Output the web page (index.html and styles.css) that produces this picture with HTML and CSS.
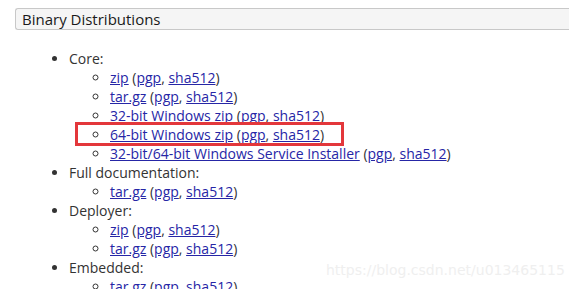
FILE: index.html
```html
<!DOCTYPE html>
<html lang="en">
<head>
    <meta charset="UTF-8" />
    <title>Binary Distributions</title>
    <link rel="stylesheet" href="styles.css">
</head>
<body>
    <h3 class="section-title">Binary Distributions</h3>
    <ul class="dist">
        <li>Core:
            <ul>
                <li><a href="#">zip</a> (<a href="#">pgp</a>, <a href="#">sha512</a>)</li>
                <li><a href="#">tar.gz</a> (<a href="#">pgp</a>, <a href="#">sha512</a>)</li>
                <li><a href="#">32-bit Windows zip</a> (<a href="#">pgp</a>, <a href="#">sha512</a>)</li>
                <li class="marked"><a href="#">64-bit Windows zip</a> (<a href="#">pgp</a>, <a href="#">sha512</a>)</li>
                <li><a href="#">32-bit/64-bit Windows Service Installer</a> (<a href="#">pgp</a>, <a href="#">sha512</a>)</li>
            </ul>
        </li>
        <li>Full documentation:
            <ul>
                <li><a href="#">tar.gz</a> (<a href="#">pgp</a>, <a href="#">sha512</a>)</li>
            </ul>
        </li>
        <li>Deployer:
            <ul>
                <li><a href="#">zip</a> (<a href="#">pgp</a>, <a href="#">sha512</a>)</li>
                <li><a href="#">tar.gz</a> (<a href="#">pgp</a>, <a href="#">sha512</a>)</li>
            </ul>
        </li>
        <li>Embedded:
            <ul>
                <li><a href="#">tar.gz</a> (<a href="#">pgp</a>, <a href="#">sha512</a>)</li>
            </ul>
        </li>
    </ul>
    <div class="watermark">https://blog.csdn.net/u013465115</div>
</body>
</html>
```
FILE: styles.css
```css
body {
    font-family: 'Open Sans', sans-serif;
    font-size: 14px;
    line-height: 19px;
    color: #333;
    background-color: white;
    margin: 0;
    padding: 0;
    overflow: hidden;
    position: relative;
    height: 289px;
}

.section-title {
    margin: 8px 0 0 15px;
    padding: 0 6px;
    height: 20px;
    line-height: 20px;
    font-size: 15px;
    font-weight: normal;
    color: #1a1a1a;
    background-color: #f5f5f5;
    border: 1px solid #c8c8c8;
    border-right: none;
    border-radius: 3px 0 0 3px;
}

.dist {
    margin: 19px 0 0 0;
    padding-left: 69px;
    list-style: disc;
}

.dist ul {
    margin: 0;
    padding-left: 41px;
    list-style: circle;
}

a {
    color: #2626a6;
}

.marked {
    position: relative;
}

.marked::after {
    content: "";
    position: absolute;
    left: -35px;
    top: -3px;
    width: 263px;
    height: 18px;
    border: 3px solid #e3373b;
}

.watermark {
    position: absolute;
    left: 326px;
    top: 261px;
    font-family: 'DejaVu Sans', sans-serif;
    font-size: 14px;
    color: #efefef;
}
```
